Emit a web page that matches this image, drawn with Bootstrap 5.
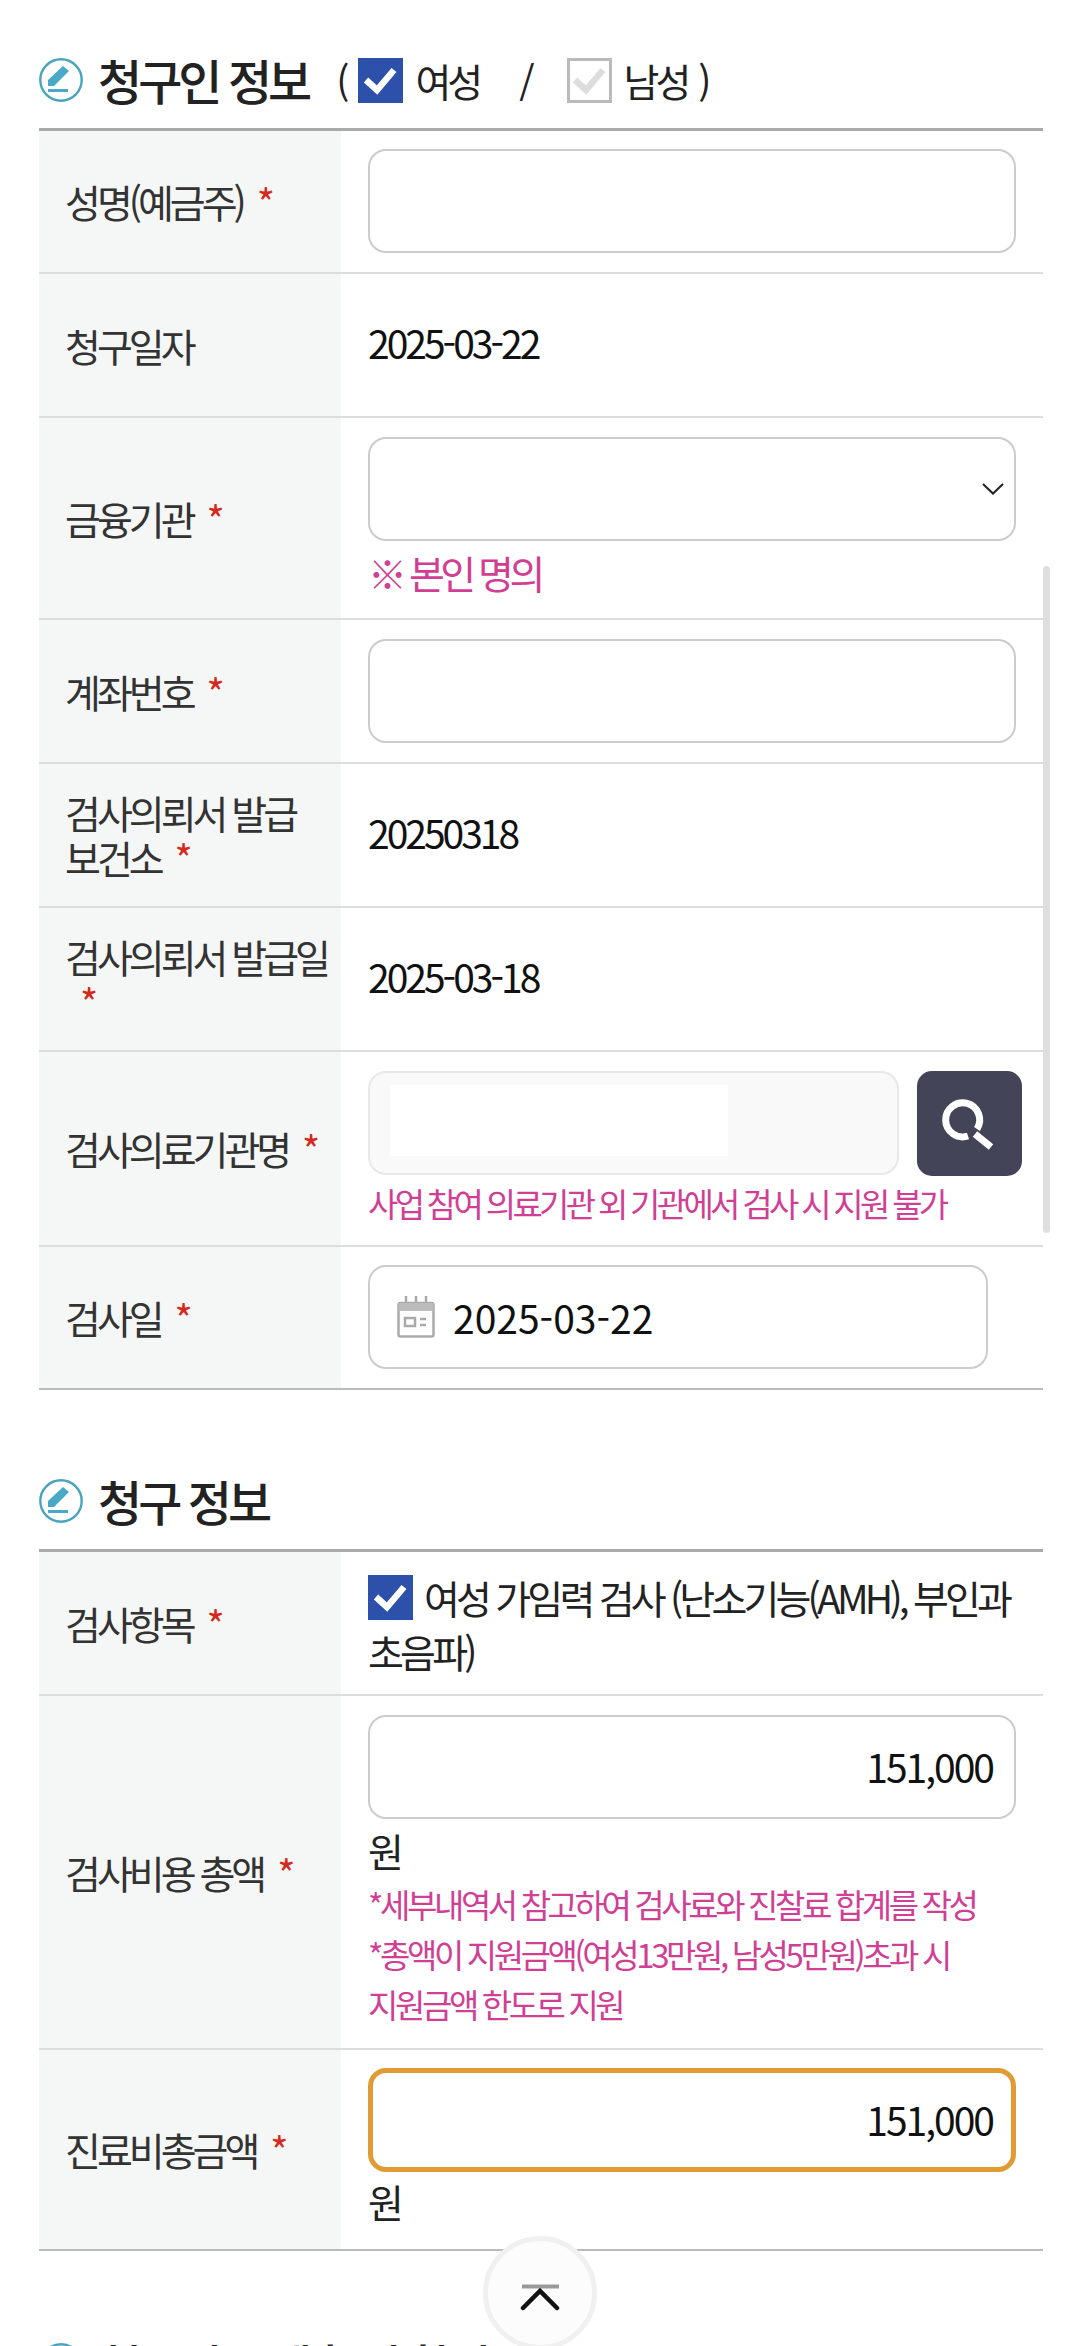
<!DOCTYPE html>
<html lang="ko">
<head>
<meta charset="utf-8">
<title>청구인 정보</title>
<link href="https://cdn.jsdelivr.net/npm/bootstrap@5.3.0/dist/css/bootstrap.min.css" rel="stylesheet">
<style>
body{font-family:"Noto Sans CJK KR","Noto Sans",sans-serif;font-size:39px;letter-spacing:-4px;color:#222;background:#fff;overflow:hidden;word-break:keep-all}
.claim-page{position:relative;width:1080px;height:2346px;overflow:hidden;padding:58px 37px 0 39px}
.sec-head{height:44px;margin-bottom:26px;gap:15px;align-items:center}
.sec-icon{width:44px;height:44px;flex:none}
.sec-title{font-size:48px;font-weight:500;line-height:44px;margin:-3px 0 0;color:#222;letter-spacing:-4px;white-space:nowrap}
.gender{line-height:44px;margin-left:13px;color:#222;white-space:nowrap}
.paren-open{margin-right:13px}
.tick{width:45px;height:45px;flex:none;display:block}
.tick-label{margin-left:12px}
.slash-sep{margin:0 36px 0 40px}
.paren-close{margin-left:11px}
.claim-table{width:1004px;table-layout:fixed;border-collapse:separate;border-spacing:0;border-top:3px solid #aaa;border-bottom:2px solid #bbb;margin:0;--bs-table-bg:transparent}
.claim-table th,.claim-table td{border-bottom:2px solid #ddd;box-shadow:none;vertical-align:middle;height:144px}
.claim-table tr:first-child th,.claim-table tr:first-child td{height:143px}
.claim-table tr:first-child td{padding-top:18px}
.claim-table tr:last-child th,.claim-table tr:last-child td{border-bottom:0;height:141px}
.claim-table tr:last-child td{padding-top:18px}
.claim-table th{width:302px;background:#f5f7f6;font-weight:400;color:#333;line-height:45px;padding:0 0 0 26px;letter-spacing:-4px}
.claim-table td{padding:19px 27px 19px 27px;line-height:58px;color:#222}
.req{color:#d4291c;margin-left:7px}
.req-block{display:block;margin-left:15px;line-height:45px}
.box{display:block;width:648px;height:104px;border:2px solid #ccc;border-radius:18px;background:#fff;position:relative;line-height:98px;padding:0 21px;letter-spacing:-2px}
.box-num{text-align:right;color:#111}
.box-focus{border:5px solid #e09b35;line-height:92px;padding:0 18px}
.sel-arrow{position:absolute;right:10px;top:44px;width:22px;height:12px}
.search-line{gap:18px;width:654px}
.box-off{width:531px;background:#f9f9f9;border-color:#e8e8e8;padding:12px 20px;flex:none}
.box-off-fill{display:block;height:71px;width:338px;background:#fff}
.search-btn{width:105px;height:105px;background:#434458;border:0;border-radius:15px;padding:0;flex:none}
.search-btn svg{display:block}
.box-date{width:620px;letter-spacing:0;padding:0 0 0 27px;gap:18px;align-items:center;color:#111;display:flex}
.note{font-size:33px;line-height:50px;color:#d03f94;letter-spacing:-3.400px}
.note-tight{letter-spacing:-3.700px}
.note-shift{position:relative;top:2px}
.note-lg{font-size:39px;line-height:58px;color:#d03f94;display:block;letter-spacing:-4.500px;position:relative;top:2px}
.won{display:block;margin-top:2px}
.claim-table td.ink{color:#111;letter-spacing:-3px;padding-top:16px;padding-bottom:22px}
.claim-table td.agree{line-height:54px;padding-top:16px;padding-bottom:16px;letter-spacing:-3.800px}
.agree svg{float:left;margin:5px 11px 0 0}
.sec-gap{margin-bottom:89px}
.sec-gap-last{margin-bottom:92px}
.scroll-thumb{position:absolute;left:1043px;top:566px;width:7px;height:667px;border-radius:4px;background:#dfdfe2}
.to-top{position:absolute;left:483px;top:2236px;width:114px;height:114px;border-radius:50%;background:#fcfcfc;border:5px solid #f0f0f0;padding:16px 0 0}
.to-top svg{display:block;margin:0 auto}
</style>
</head>
<body>
<main class="claim-page">
  <section class="sec-gap">
    <div class="d-flex sec-head">
      <svg class="sec-icon" viewBox="0 0 44 44"><circle cx="22" cy="22" r="20.700" fill="none" stroke="#4aa3c0" stroke-width="2.400"/><path d="M24 8l6 5-15 15H9v-6z" fill="#4aa9c6"/><rect x="9" y="31" width="20" height="3" fill="#4aa9c6"/></svg>
      <h2 class="sec-title">청구인 정보</h2>
      <div class="d-flex align-items-center gender">
        <span class="paren-open">(</span>
        <svg class="tick" viewBox="0 0 45 45"><rect width="45" height="45" fill="#2d50ab"/><path d="M8 22l11 10L36 12" fill="none" stroke="#fff" stroke-width="6.500"/></svg>
        <span class="tick-label">여성</span>
        <span class="slash-sep">/</span>
        <svg class="tick" viewBox="0 0 45 45"><rect x="1.500" y="1.500" width="42" height="42" fill="#fff" stroke="#bbb" stroke-width="3"/><path d="M8 22l11 10L36 12" fill="none" stroke="#ddd" stroke-width="6.500"/></svg>
        <span class="tick-label">남성</span>
        <span class="paren-close">)</span>
      </div>
    </div>
    <table class="table claim-table">
      <tr><th>성명(예금주) <span class="req">*</span></th><td><span class="box"></span></td></tr>
      <tr><th>청구일자</th><td class="ink">2025-03-22</td></tr>
      <tr><th>금융기관 <span class="req">*</span></th><td>
        <span class="box"><svg class="sel-arrow" viewBox="0 0 22 12"><path d="M1 1l10 9.500L21 1" fill="none" stroke="#222" stroke-width="2"/></svg></span>
        <span class="note-lg">※ 본인 명의</span></td></tr>
      <tr><th>계좌번호 <span class="req">*</span></th><td><span class="box"></span></td></tr>
      <tr><th>검사의뢰서 발급 보건소 <span class="req">*</span></th><td class="ink">20250318</td></tr>
      <tr><th>검사의뢰서 발급일 <span class="req req-block">*</span></th><td class="ink">2025-03-18</td></tr>
      <tr><th>검사의료기관명 <span class="req">*</span></th><td>
        <div class="d-flex search-line">
          <span class="box box-off"><span class="box-off-fill"></span></span>
          <button type="button" class="search-btn" aria-label="검색"><svg width="105" height="105" viewBox="0 0 105 105"><path d="M51 65A17 17 0 1 1 60 58" fill="none" stroke="#fff" stroke-width="7"/><path d="M58 63l16 13" stroke="#fff" stroke-width="7" fill="none"/></svg></button>
        </div>
        <div class="note note-tight note-shift">사업 참여 의료기관 외 기관에서 검사 시 지원 불가</div></td></tr>
      <tr><th>검사일 <span class="req">*</span></th><td>
        <span class="box box-date"><svg width="38" height="42" viewBox="0 0 38 42" class="flex-none"><g fill="none" stroke="#aaa" stroke-width="2.500"><rect x="1.500" y="7" width="35" height="33.500" rx="2"/><path d="M9 0v7M19 0v7M29 0v7"/></g><rect x="1.500" y="7" width="35" height="8" fill="#bbb"/><rect x="8" y="22" width="10" height="8" fill="none" stroke="#aaa" stroke-width="2.500"/><path d="M23 23h6M23 29h6" stroke="#aaa" stroke-width="2.500"/></svg>2025-03-22</span></td></tr>
    </table>
  </section>
  <section class="sec-gap-last">
    <div class="d-flex sec-head">
      <svg class="sec-icon" viewBox="0 0 44 44"><circle cx="22" cy="22" r="20.700" fill="none" stroke="#4aa3c0" stroke-width="2.400"/><path d="M24 8l6 5-15 15H9v-6z" fill="#4aa9c6"/><rect x="9" y="31" width="20" height="3" fill="#4aa9c6"/></svg>
      <h2 class="sec-title">청구 정보</h2>
    </div>
    <table class="table claim-table">
      <tr><th>검사항목 <span class="req">*</span></th><td class="agree">
        <svg class="tick" viewBox="0 0 45 45"><rect width="45" height="45" fill="#2d50ab"/><path d="M8 22l11 10L36 12" fill="none" stroke="#fff" stroke-width="6.500"/></svg>여성 가임력 검사 (난소기능(AMH), 부인과 초음파)</td></tr>
      <tr><th>검사비용 총액 <span class="req">*</span></th><td>
        <span class="box box-num">151,000</span>
        <span class="won">원</span>
        <div class="note">*세부내역서 참고하여 검사료와 진찰료 합계를 작성</div>
        <div class="note">*총액이 지원금액(여성13만원, 남성5만원)초과 시 지원금액 한도로 지원</div></td></tr>
      <tr><th>진료비총금액 <span class="req">*</span></th><td>
        <span class="box box-num box-focus">151,000</span>
        <span>원</span></td></tr>
    </table>
  </section>
  <section>
    <div class="d-flex sec-head">
      <svg class="sec-icon" viewBox="0 0 44 44"><circle cx="22" cy="22" r="20.700" fill="none" stroke="#4aa3c0" stroke-width="2.400"/></svg>
      <h2 class="sec-title">청구서류 제출 및 확인</h2>
    </div>
  </section>
  <div class="scroll-thumb"></div>
  <button type="button" class="to-top" aria-label="맨 위로"><svg width="40" height="34" viewBox="0 0 40 34"><path d="M2 2.500h37" stroke="#999" stroke-width="4"/><path d="M3 24L20 7l17 17" fill="none" stroke="#111" stroke-width="4.500" stroke-linecap="round"/></svg></button>
</main>
<script src="https://cdn.jsdelivr.net/npm/bootstrap@5.3.0/dist/js/bootstrap.bundle.min.js"></script>
</body>
</html>
